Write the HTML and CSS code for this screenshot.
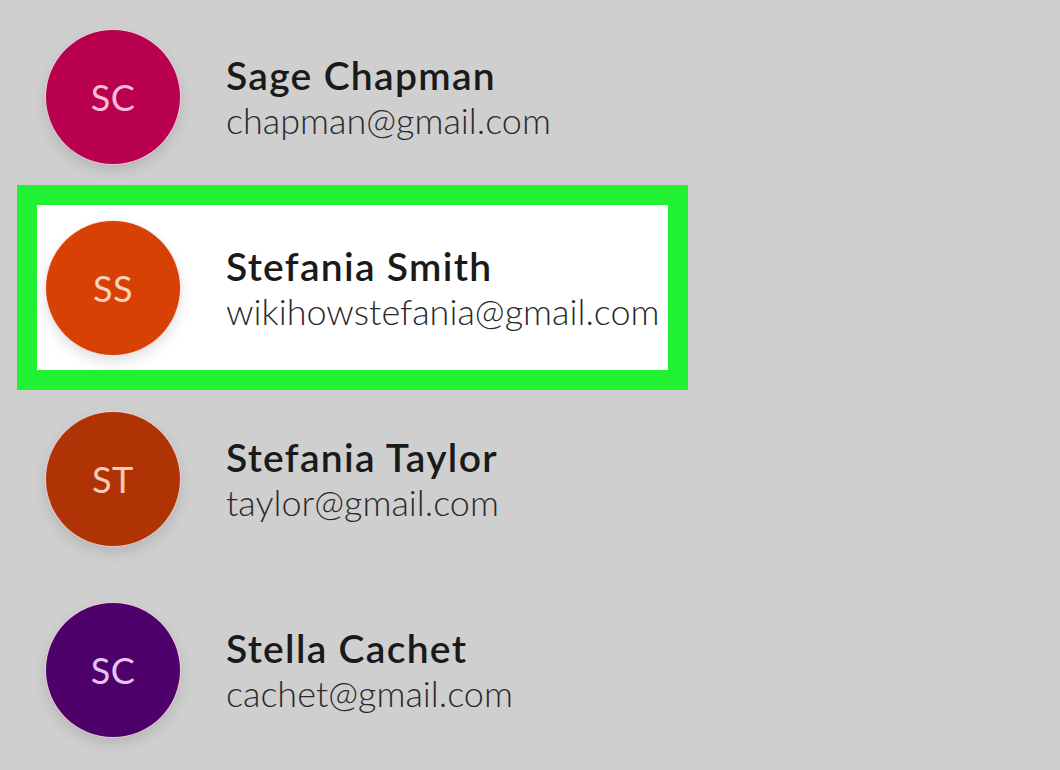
FILE: index.html
```html
<!DOCTYPE html>
<html lang="en">
<head>
    <meta charset="UTF-8">
    <meta name="viewport" content="width=device-width, initial-scale=1.0">
    <title>Contacts</title>
    <link rel="stylesheet" href="styles.css">
</head>
<body>

<ul class="contact-list">
    <li class="contact">
        <div class="avatar avatar-crimson">SC</div>
        <div class="details">
            <div class="name">Sage Chapman</div>
            <div class="email">chapman@gmail.com</div>
        </div>
    </li>
    <li class="contact selected">
        <div class="avatar avatar-orange">SS</div>
        <div class="details">
            <div class="name">Stefania Smith</div>
            <div class="email">wikihowstefania@gmail.com</div>
        </div>
    </li>
    <li class="contact">
        <div class="avatar avatar-rust">ST</div>
        <div class="details">
            <div class="name">Stefania Taylor</div>
            <div class="email">taylor@gmail.com</div>
        </div>
    </li>
    <li class="contact">
        <div class="avatar avatar-purple">SC</div>
        <div class="details">
            <div class="name">Stella Cachet</div>
            <div class="email">cachet@gmail.com</div>
        </div>
    </li>
</ul>

</body>
</html>
```

FILE: styles.css
```css
* {
    margin: 0;
    padding: 0;
    box-sizing: border-box;
}

body {
    font-family: 'Lato', 'Open Sans', sans-serif;
    background-color: #cfcfcf;
    color: #1c1c1c;
    width: 1060px;
    height: 770px;
    overflow: hidden;
}

.contact-list {
    list-style: none;
    padding-top: 1px;
}

.contact {
    display: flex;
    align-items: center;
    gap: 46px;
    height: 191px;
    padding-left: 46px;
}

/* highlighted row: white card with a thick green frame */
.contact.selected {
    width: 631px;
    height: 165px;
    margin: 13px 0 13px 37px;
    padding-left: 9px;
    background-color: #fff;
    outline: 20px solid #20f233;
}

.avatar {
    width: 134px;
    height: 134px;
    flex-shrink: 0;
    border-radius: 50%;
    display: flex;
    align-items: center;
    justify-content: center;
    font-size: 36px;
    font-weight: 400;
    letter-spacing: 0.5px;
    box-shadow: 0 0 0 1px rgba(255, 210, 220, 0.55), 0 6px 14px rgba(0, 0, 0, 0.13);
}

.avatar-crimson {
    background-color: #b8004f;
    color: #f7bfd6;
}

.avatar-orange {
    background-color: #d74204;
    color: #fbd0bd;
}

.avatar-rust {
    background-color: #b03306;
    color: #f6cbb8;
}

.avatar-purple {
    background-color: #4e006b;
    color: #e4c4f0;
}

.name {
    font-size: 39px;
    font-weight: 600;
    letter-spacing: 1.3px;
    line-height: 46px;
    color: #1a1a1a;
}

.email {
    font-size: 36px;
    font-weight: 300;
    line-height: 44px;
    color: #2a2a2a;
}
```
